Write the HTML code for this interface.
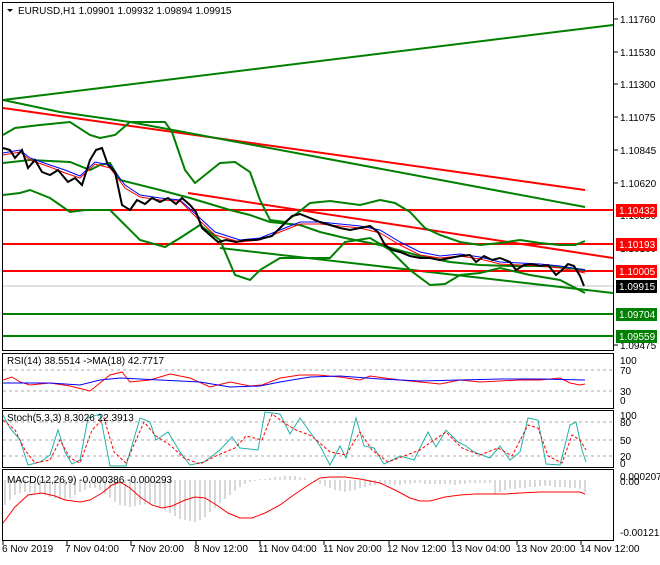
<!DOCTYPE html>
<html><head><meta charset="utf-8"><style>
body{margin:0;background:#fff;width:660px;height:560px;overflow:hidden;font-family:"Liberation Sans",sans-serif}
svg text{font-family:"Liberation Sans",sans-serif;font-size:10px;fill:#000}
</style></head><body>
<svg width="660" height="560" viewBox="0 0 660 560" xmlns="http://www.w3.org/2000/svg">
<rect width="660" height="560" fill="#fff"/>
<g fill="none" stroke="#000" stroke-width="1">
<rect x="2.5" y="2.5" width="611" height="348"/>
<rect x="2.5" y="353.5" width="611" height="55"/>
<rect x="2.5" y="410.5" width="611" height="57"/>
<rect x="2.5" y="469.5" width="611" height="71"/>
</g>
<g stroke="#000">
<line x1="614" y1="19" x2="618" y2="19"/><line x1="614" y1="52" x2="618" y2="52"/><line x1="614" y1="84" x2="618" y2="84"/><line x1="614" y1="117" x2="618" y2="117"/><line x1="614" y1="150" x2="618" y2="150"/><line x1="614" y1="183" x2="618" y2="183"/><line x1="614" y1="345" x2="618" y2="345"/>
</g>
<g>
<text x="620" y="23">1.11760</text><text x="620" y="56">1.11530</text><text x="620" y="88">1.11300</text><text x="620" y="121">1.11075</text><text x="620" y="154">1.10845</text><text x="620" y="187">1.10620</text><text x="620" y="219">1.10390</text><text x="620" y="252">1.10160</text><text x="620" y="349">1.09475</text>
</g>
<g font-size="10">
<rect x="616" y="204" width="41" height="13" fill="#f00"/><text x="619" y="214" style="fill:#fff">1.10432</text>
<rect x="616" y="238" width="41" height="13" fill="#f00"/><text x="619" y="248" style="fill:#fff">1.10193</text>
<rect x="616" y="265" width="41" height="13" fill="#f00"/><text x="619" y="275" style="fill:#fff">1.10005</text>
<rect x="616" y="280" width="41" height="13" fill="#000"/><text x="619" y="290" style="fill:#fff">1.09915</text>
<rect x="616" y="308" width="41" height="13" fill="#008000"/><text x="619" y="318" style="fill:#fff">1.09704</text>
<rect x="616" y="330" width="41" height="13" fill="#008000"/><text x="619" y="340" style="fill:#fff">1.09559</text>
</g>
<text x="18" y="14">EURUSD,H1  1.09901 1.09932 1.09894 1.09915</text>
<path d="M7 9h6l-3 3z" fill="#000"/>
<line x1="3" y1="286" x2="613" y2="286" stroke="#c0c0c0"/>
<g stroke-width="2" fill="none">
<line x1="3" y1="100" x2="613" y2="25" stroke="#008000"/>
<line x1="3" y1="108" x2="585" y2="190" stroke="#f00"/>
<polyline points="3,100 60,112 130,122 585,207" stroke="#008000"/>
<line x1="188" y1="193" x2="613" y2="258" stroke="#f00"/>
<line x1="220" y1="248" x2="613" y2="293" stroke="#008000"/>
<line x1="3" y1="210" x2="613" y2="210" stroke="#f00"/>
<line x1="3" y1="244" x2="613" y2="244" stroke="#f00"/>
<line x1="3" y1="271" x2="613" y2="271" stroke="#f00"/>
<line x1="3" y1="314" x2="613" y2="314" stroke="#008000"/>
<line x1="3" y1="336" x2="613" y2="336" stroke="#008000"/>
<polyline stroke="#008000" points="3,135 15,128 40,125 70,122 90,135 100,138 115,135 130,122 165,122 172,132 185,170 195,183 205,175 220,163 235,162 250,172 260,200 270,220 285,222 300,211 310,203 330,201 360,205 380,200 395,203 410,212 425,228 440,235 460,242 480,245 500,243 520,240 540,243 560,245 575,245 585,241"/>
<polyline stroke="#008000" points="3,163 30,160 70,162 90,170 100,165 110,163 120,180 160,190 190,198 230,210 250,215 270,222 300,225 320,232 345,238 380,245 420,256 450,262 480,265 510,266 540,266 560,267 585,270"/>
<polyline stroke="#008000" points="3,195 20,193 30,190 50,198 70,212 85,210 110,210 125,225 140,240 165,247 180,238 200,225 220,240 235,275 250,280 260,270 280,258 300,258 330,258 345,242 370,238 390,250 410,270 430,285 445,284 460,275 480,273 500,268 530,275 560,280 585,293"/>
</g>
<g fill="none" stroke-width="1">
<polyline stroke="#00f" points="3,153 20,150 30,158 50,165 65,170 80,176 95,162 110,165 125,185 140,195 160,198 180,200 200,218 215,232 240,240 260,238 280,230 300,222 320,222 340,224 360,226 380,230 400,242 420,252 440,256 460,254 480,257 500,262 520,263 540,264 560,266 585,270"/>
<polyline stroke="#f00" points="3,155 20,152 30,160 50,167 65,173 80,178 95,164 110,168 125,188 140,197 160,200 180,201 200,221 215,235 240,242 260,240 280,232 300,224 320,224 340,226 360,228 380,233 400,245 420,255 440,258 460,256 480,259 500,264 520,265 540,266 560,268 585,273"/>
</g>
<polyline fill="none" stroke="#000" stroke-width="2" points="3,148 10,150 15,158 22,150 28,168 35,160 42,172 50,175 58,170 68,182 75,178 82,185 90,160 96,150 102,148 108,165 115,172 122,205 130,210 137,200 145,204 152,198 160,202 168,198 176,204 182,198 190,205 196,212 202,228 210,235 218,242 226,240 236,242 246,240 256,240 264,238 272,236 282,226 292,216 300,214 310,218 320,222 330,225 340,228 350,230 360,228 370,226 378,232 385,245 392,250 400,252 410,256 420,258 430,258 440,260 450,258 460,256 470,255 476,262 484,256 492,260 500,258 510,262 516,270 524,265 532,264 540,266 548,265 556,275 562,270 568,264 574,266 580,276 584,286"/>
<line x1="3" y1="370" x2="613" y2="370" stroke="#aaa" stroke-dasharray="3,3"/>
<line x1="3" y1="391" x2="613" y2="391" stroke="#aaa" stroke-dasharray="3,3"/>
<polyline fill="none" stroke="#f00" points="3,380 12,377 20,382 30,385 50,383 70,386 90,391 110,375 122,372 130,382 150,380 170,374 190,378 210,387 230,382 250,386 262,385 280,378 300,375 318,375 340,377 360,380 370,376 400,380 420,382 440,384 460,380 480,382 500,381 520,380 540,380 560,378 570,383 580,385 585,384"/>
<polyline fill="none" stroke="#00f" points="3,383 50,383 80,385 100,380 120,378 160,380 200,382 230,387 260,386 280,382 310,377 340,376 380,379 420,381 460,380 500,379 540,379 585,380"/>
<text x="7" y="364">RSI(14) 38.5514  -&gt;MA(18) 42.7717</text>
<text x="620" y="364">100</text><text x="620" y="374">70</text><text x="620" y="395">30</text><text x="620" y="404">0</text>
<line x1="3" y1="422" x2="613" y2="422" stroke="#aaa" stroke-dasharray="3,3"/>
<line x1="3" y1="440" x2="613" y2="440" stroke="#aaa" stroke-dasharray="3,3"/>
<line x1="3" y1="456" x2="613" y2="456" stroke="#aaa" stroke-dasharray="3,3"/>
<polyline fill="none" stroke="#20b2aa" points="3,415 10,428 20,440 28,465 40,462 50,455 58,430 65,452 72,464 80,460 88,418 100,414 110,466 126,466 140,418 150,422 156,440 168,432 180,452 190,465 204,462 220,450 232,437 240,448 258,450 265,412 280,414 290,434 300,418 310,432 320,446 330,465 340,446 346,458 356,418 364,446 374,448 384,464 400,456 414,460 428,432 436,447 446,430 458,442 466,446 474,452 490,458 500,446 510,460 520,452 528,418 538,420 546,464 560,465 570,425 576,422 582,450 586,462"/>
<polyline fill="none" stroke="#f00" stroke-dasharray="3,2" points="3,420 15,430 25,450 35,463 50,460 60,440 70,458 80,463 92,430 104,418 114,452 126,463 144,422 156,436 170,445 184,458 200,464 218,455 235,448 246,436 262,440 272,414 286,424 296,430 312,436 330,452 346,455 360,432 372,450 388,462 404,456 420,450 434,440 446,432 462,448 480,455 498,448 512,456 528,425 538,428 548,456 562,463 572,435 580,440 586,450"/>
<text x="7" y="421">Stoch(5,3,3) 8.3026 22.3913</text>
<text x="620" y="419">100</text><text x="620" y="426">80</text><text x="620" y="444">50</text><text x="620" y="460">20</text><text x="620" y="467">0</text>
<g stroke="#b0b0b0" stroke-width="1">
<path d="M5 480V505M10 480V500M15 480V495M20 480V493M25 480V492M30 480V492M35 480V493M40 480V494M45 480V495M50 480V497M55 480V498M60 480V499M65 480V500M70 480V498M75 480V495M80 480V492M85 480V490M90 480V488M95 480V488M100 480V490M105 480V494M110 480V498M115 480V502M120 480V505M125 480V506M130 480V507M135 480V506M140 480V505M145 480V504M150 480V503M155 480V504M160 480V507M165 480V510M170 480V513M175 480V516M180 480V519M185 480V520M190 480V521M195 480V522M200 480V520M205 480V517M210 480V512M215 480V508M220 480V503M225 480V499M230 480V495M235 480V491M240 480V487M245 480V484M250 480V482M255 480V481M260 480V479M265 480V479M270 480V478M275 480V477M280 480V477M285 480V476M290 480V476M295 480V476M300 480V477M305 480V478M310 480V480M315 480V482M320 480V484M325 480V486M330 480V488M335 480V490M340 480V491M345 480V492M350 480V491M355 480V490M360 480V488M365 480V487M370 480V486M375 480V485M380 480V484M385 480V484M390 480V484M395 480V485M400 480V485M405 480V484M410 480V484M415 480V483M420 480V483M425 480V484M430 480V484M435 480V484M440 480V484M445 480V484M450 480V484M455 480V485M460 480V484M465 480V484M470 480V483M475 480V483M480 480V483M485 480V483M490 480V483M495 480V494M500 480V492M505 480V490M510 480V489M515 480V489M520 480V488M525 480V488M530 480V487M535 480V487M540 480V486M545 480V486M550 480V486M555 480V487M560 480V487M565 480V487M570 480V488M575 480V488M580 480V489M585 480V492"/>
</g>
<polyline fill="none" stroke="#f00" points="3,523 15,507 28,495 42,493 55,496 65,500 80,502 90,500 102,493 112,485 120,482 130,488 140,497 152,505 162,508 172,506 185,500 195,497 205,498 215,504 228,513 240,518 252,518 265,513 280,505 295,494 310,484 320,478 330,477 345,477 360,479 380,483 395,490 410,498 420,501 430,501 445,497 460,495 475,494 490,494 505,494 520,493 540,492 560,492 580,492 585,494"/>
<text x="7" y="483">MACD(12,26,9) -0.000386 -0.000293</text>
<text x="620" y="480">0.000207</text><text x="620" y="485">0.00</text><text x="620" y="536">-0.001212</text>
<g stroke="#000">
<line x1="3" y1="541" x2="3" y2="545"/><line x1="67" y1="541" x2="67" y2="545"/><line x1="131" y1="541" x2="131" y2="545"/><line x1="196" y1="541" x2="196" y2="545"/><line x1="260" y1="541" x2="260" y2="545"/><line x1="324" y1="541" x2="324" y2="545"/><line x1="389" y1="541" x2="389" y2="545"/><line x1="453" y1="541" x2="453" y2="545"/><line x1="517" y1="541" x2="517" y2="545"/><line x1="581" y1="541" x2="581" y2="545"/>
</g>
<text x="2" y="552">6 Nov 2019</text><text x="65" y="552">7 Nov 04:00</text><text x="130" y="552">7 Nov 20:00</text><text x="194" y="552">8 Nov 12:00</text><text x="258" y="552">11 Nov 04:00</text><text x="323" y="552">11 Nov 20:00</text><text x="387" y="552">12 Nov 12:00</text><text x="451" y="552">13 Nov 04:00</text><text x="516" y="552">13 Nov 20:00</text><text x="580" y="552">14 Nov 12:00</text>
</svg>
</body></html>
